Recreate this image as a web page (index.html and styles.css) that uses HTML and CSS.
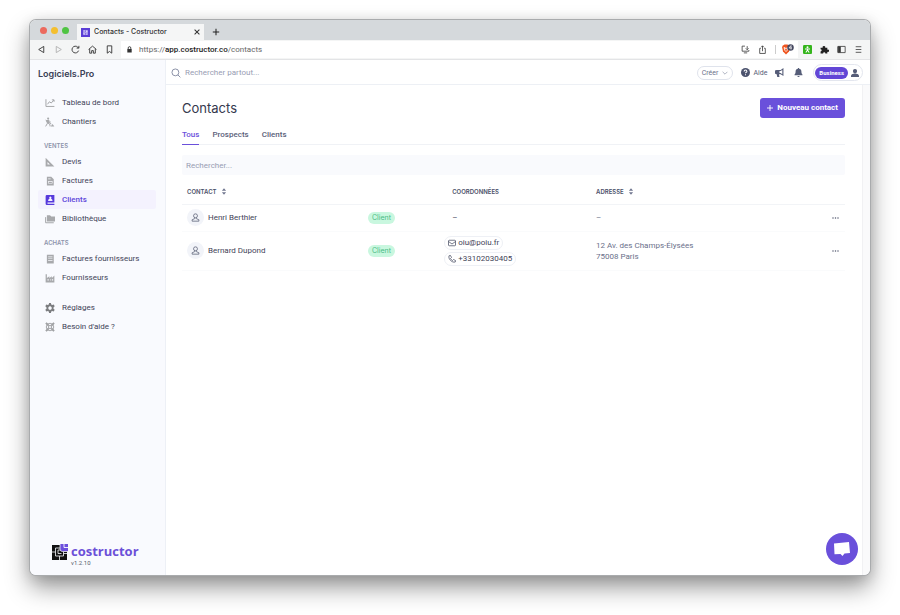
FILE: index.html
```
<!DOCTYPE html>
<html lang="fr">
<head>
<meta charset="utf-8">
<meta name="viewport" content="width=device-width, initial-scale=1">
<title>Contacts - Costructor</title>
<link rel="stylesheet" href="styles.css">
</head>
<body>
<div class="window">
  <div class="tabstrip">
    <div class="lights"><span class="light red"></span><span class="light yellow"></span><span class="light green"></span></div>
    <div class="browser-tab">
      <svg class="favicon" viewBox="0 0 16 16"><path fill="#5b3fd6" d="M0 0h16v16H0z"/><path fill="#d9d2fa" d="M4 4h8v8H4z"/><path stroke="#5b3fd6" fill="none" d="M4 7h4V4M8 12V9h4M6 9h2"/></svg>
      <span>Contacts - Costructor</span>
      <button class="plain close" aria-label="Fermer l'onglet"><svg class="ic6" viewBox="0 0 10 10"><path stroke="#333" stroke-width="1.7" d="M1 1l8 8M9 1L1 9"/></svg></button>
    </div>
    <button class="plain newtab" aria-label="Nouvel onglet"><svg class="ic8" viewBox="0 0 10 10"><path stroke="#222" stroke-width="1.3" d="M5 1v8M1 5h8"/></svg></button>
  </div>
  <div class="toolbar">
    <div class="navbtns">
      <button class="plain" aria-label="Précédent"><svg class="ic9" viewBox="0 0 16 16"><path d="M12 2.500v11L3 8z"/></svg></button>
      <button class="plain faded" aria-label="Suivant"><svg class="ic9" viewBox="0 0 16 16"><path d="M4 2.500v11L13 8z"/></svg></button>
      <button class="plain" aria-label="Recharger"><svg class="ic9" viewBox="0 0 16 16"><path d="M13.500 10A6 6 0 1 1 12 3.800l1.500 1.700M14 1.500v4h-4"/></svg></button>
      <button class="plain" aria-label="Accueil"><svg class="ic9" viewBox="0 0 16 16"><path d="M1 8l7-6 7 6M3 7v7.500h3.500V10h3v4.500H13V7"/></svg></button>
      <button class="plain" aria-label="Favori"><svg class="ic9" viewBox="0 0 16 16"><path d="M4 1.500h8v13l-4-3-4 3z"/></svg></button>
    </div>
    <div class="address">
      <svg class="ic7" viewBox="0 0 16 16"><path fill="#333" d="M3 7h10v8H3z"/><path fill="none" stroke="#333" stroke-width="2" d="M5 7V4.500a3 3 0 0 1 6 0V7"/></svg>
      <span class="url">https://<b>app.costructor.co</b>/contacts</span>
      <svg class="line ic9" viewBox="0 0 16 16"><path d="M7 2H2v9h12V9M5 14h6M11 2v6M8.500 6l2.500 2.500L13.500 6"/></svg>
      <svg class="line ic9" viewBox="0 0 16 16"><path d="M5 6H3v9h10V6h-2M8 11V1.500M5.500 4L8 1.500 10.500 4"/></svg>
      <span class="bar"></span>
      <svg class="brave" viewBox="0 0 26 22"><path fill="#f0551f" d="M4 3l3-2h6l3 2 2 3-2 9-6 6-6-6L2 6z"/><path fill="none" stroke="#fff" stroke-width="1.800" d="M6 7l2 6 2 2 2-2 2-6-4 2z"/><circle cx="19" cy="7" r="6.500" fill="#454860"/><path fill="none" stroke="#fff" stroke-width="1.400" d="M20 11V3l-4 5h6"/></svg>
    </div>
    <div class="extensions">
      <svg class="ic9" viewBox="0 0 16 16"><rect width="16" height="16" rx="2" fill="#35b51c"/><circle cx="8" cy="4" r="1.800" fill="#fff"/><path stroke="#fff" stroke-width="1.800" fill="none" d="M3.500 7h9M8 6v4M8 9l-3 4.500M8 9l3 4.500"/></svg>
      <svg class="ic9" viewBox="0 0 16 16"><path fill="#222" d="M1 5h4a2.200 2.200 0 1 1 4 0h4v3.500a2.200 2.200 0 1 1 0 3.500v3H9.500a2 2 0 1 0-4 0H1v-3.500a2 2 0 1 0 0-4z"/></svg>
      <svg class="line ic9" viewBox="0 0 16 16"><path d="M1.500 2.500h13v11h-13z"/><path fill="#333" d="M2 3h4v10H2z"/></svg>
      <svg class="line ic9" viewBox="0 0 16 16"><path d="M3 3h10M3 8h10M3 13h10"/></svg>
    </div>
  </div>

  <div class="app">
    <aside class="sidebar">
      <div class="brand">Logiciels.Pro</div>
      <nav>
        <a href="#"><svg viewBox="0 0 16 16"><path class="s" d="M1.500 2v11.500H15M4 10l3-4 3 2 4-4.500M11 3h3.500v3"/></svg>Tableau de bord</a>
        <a href="#"><svg viewBox="0 0 16 16"><circle cx="5" cy="2.500" r="1.700"/><path class="s" d="M2 7l3-2 4 3M5 6l-1 4-3 5M5 10l3 2v3M1 5l9 6"/><path d="M2 5h4l1 5H3zM9 15l3-4 3 4z"/></svg>Chantiers</a>
        <h2>VENTES</h2>
        <a href="#"><svg viewBox="0 0 16 16"><path fill-rule="evenodd" d="M1 1l14 14H1zM4 8v4h4z"/></svg>Devis</a>
        <a href="#"><svg viewBox="0 0 16 16"><path fill-rule="evenodd" d="M3 1h7l4 4v10H3zM5 4v1h4V4zM5 8v4h7V8zM6 9h5v2H6z"/></svg>Factures</a>
        <a href="#" class="active" aria-current="page"><svg viewBox="0 0 16 16"><path fill-rule="evenodd" d="M3 0h12v12H4v2h11v2H3a2 2 0 0 1-2-2V2a2 2 0 0 1 2-2zm5.500 2.500a1.800 1.800 0 1 0 .1 0zM5 9.500h7c0-3-1.500-3.500-3.500-3.500S5 6.500 5 9.500z"/></svg>Clients</a>
        <a href="#"><svg viewBox="0 0 16 16"><path d="M3 2h5l2 2h6v8H3z"/><path class="s" d="M1 5v9h13"/></svg>Bibliothèque</a>
        <h2>ACHATS</h2>
        <a href="#"><svg viewBox="0 0 16 16"><path fill-rule="evenodd" d="M3 1h11v14H3zM5 4v1h7V4zM5 7v1h7V7zM5 10v1h7v-1z"/></svg>Factures fournisseurs</a>
        <a href="#"><svg viewBox="0 0 16 16"><path fill-rule="evenodd" d="M1 2h2v6l4-3v3l4-3v3l4-4v11H1zM4 10v2h2v-2zM8 10v2h1v-2zM11 10v2h2v-2z"/></svg>Fournisseurs</a>
        <div class="spacer"></div>
        <a href="#"><svg class="dark" viewBox="0 0 16 16"><path fill-rule="evenodd" d="M6.500 0h3l.5 2.500 1.500.8L14 2.500l1.500 2.700-1.900 1.800v2l1.900 1.800L14 13.500l-2.500-.8-1.500.8-.5 2.500h-3L6 13.500l-1.500-.8-2.500.8L.5 10.800 2.400 9V7L.5 5.200 2 2.500l2.500.8L6 2.500zM8 5.200a2.800 2.800 0 1 0 .1 0z"/></svg>Réglages</a>
        <a href="#"><svg viewBox="0 0 16 16"><circle class="s" cx="8" cy="8" r="6"/><circle class="s" cx="8" cy="8" r="2.500"/><path class="thick" d="M1.500 1.500L6 6M14.500 1.500L10 6M1.500 14.500L6 10M14.500 14.500L10 10"/></svg>Besoin d'aide ?</a>
      </nav>
      <div class="logo">
        <svg viewBox="0 0 32 32"><path fill="#111" d="M0 2h30v30H0z"/><path fill="none" stroke="#f9fafe" stroke-width="1.600" d="M16 8H7v16h16v-8M0 16h7M15 24v8M23 19h7M12 12v7h7M12 12h4"/><path fill="#6c4fdc" stroke="#f9fafe" stroke-width="1.500" d="M16 -1h17v16H21a5 5 0 0 1-5-5z"/><path fill="none" stroke="#f9fafe" stroke-width="1.800" d="M24 0v7h8"/></svg>
        <div><strong>costructor</strong><small>v1.2.10</small></div>
      </div>
    </aside>

    <main>
      <header class="topbar">
        <label class="global" for="global-search"><svg viewBox="0 0 16 16"><circle cx="7" cy="7" r="5.500"/><path d="M11 11l4 4"/></svg></label>
        <input id="global-search" type="search" placeholder="Rechercher partout..." aria-label="Rechercher partout">
        <button class="create">Créer <svg viewBox="0 0 10 6"><path d="M1 1l4 4 4-4"/></svg></button>
        <a class="help" href="#"><svg viewBox="0 0 16 16"><circle cx="8" cy="8" r="8"/><path fill="none" stroke="#fff" stroke-width="1.800" d="M5.500 6c0-3 5-3 5 0C10.500 7.800 8 7.500 8 9.500M8 11v2"/></svg>Aide</a>
        <button class="plain" aria-label="Annonces"><svg class="ic9 solid" viewBox="0 0 16 16"><path fill-rule="evenodd" d="M15 0v14l-5-3H7l1 5H4l-1-5a3.500 3.500 0 0 1 0-7.500h7zM13 3.500L10 5.500H8v3.500h2l3 2z"/></svg></button>
        <button class="plain" aria-label="Notifications"><svg class="ic9 solid" viewBox="0 0 16 16"><path d="M7 0h2v1.500c3 .5 4.200 2.500 4.200 5 0 3 .8 3.500 1.800 5V13H1v-1.500c1-1.500 1.800-2 1.800-5 0-2.500 1.200-4.500 4.200-5zM6 14h4a2 2 0 0 1-4 0z"/></svg></button>
        <button class="account" aria-label="Compte Business"><span>Business</span><svg class="ic8 solid" viewBox="0 0 16 16"><path d="M8 0a4 4 0 0 1 4 4.500C12 7 10 9 8 9S4 7 4 4.500A4 4 0 0 1 8 0zM0 16v-2c0-2.500 2-4 5-4.500h6c3 .5 5 2 5 4.500v2z"/></svg></button>
      </header>
      <div class="scroller">
        <section class="content">
          <div class="heading">
            <h1>Contacts</h1>
            <button class="primary"><svg class="ic6" viewBox="0 0 10 10"><path stroke="#fff" stroke-width="1.500" d="M5 0v10M0 5h10"/></svg>Nouveau contact</button>
          </div>
          <div class="tabs"><a href="#" class="on">Tous</a><a href="#">Prospects</a><a href="#">Clients</a></div>
          <input class="filter" type="search" placeholder="Rechercher..." aria-label="Rechercher un contact">
          <table>
            <thead><tr>
              <th class="c1"><span class="sortable">CONTACT <svg viewBox="0 0 8 10"><path d="M1 4L4 .5 7 4zM1 6l3 3.500L7 6z"/></svg></span></th><th class="c2"></th><th class="c3">COORDONNÉES</th>
              <th><span class="sortable">ADRESSE <svg viewBox="0 0 8 10"><path d="M1 4L4 .5 7 4zM1 6l3 3.500L7 6z"/></svg></span></th><th class="c5"></th>
            </tr></thead>
            <tbody>
              <tr>
                <td><div class="person"><span class="avatar"><svg viewBox="0 0 16 16"><circle cx="8" cy="5" r="3.500"/><path d="M6.500 8.500V10L2 12v2.500h12V12l-4.500-2V8.500"/></svg></span>Henri Berthier</div></td>
                <td><span class="badge">Client</span></td><td>–</td><td class="soft">–</td>
                <td><button class="plain more" aria-label="Actions"><svg viewBox="0 0 14 4"><circle cx="2" cy="2" r="1.500"/><circle cx="7" cy="2" r="1.500"/><circle cx="12" cy="2" r="1.500"/></svg></button></td>
              </tr>
              <tr class="tall">
                <td><div class="person"><span class="avatar"><svg viewBox="0 0 16 16"><circle cx="8" cy="5" r="3.500"/><path d="M6.500 8.500V10L2 12v2.500h12V12l-4.500-2V8.500"/></svg></span>Bernard Dupond</div></td>
                <td><span class="badge">Client</span></td>
                <td><div class="chips">
                  <a href="mailto:oiu@poiu.fr"><svg viewBox="0 0 16 16"><rect x="1" y="2.500" width="14" height="11" rx="1.500"/><path d="M1 5l7 5 7-5"/></svg>oiu@poiu.fr</a>
                  <a href="tel:+33102030405"><svg viewBox="0 0 16 16"><path d="M2 1.500L5 1l2 4-2 2c1 2 2 3 4 4l2-2 4 2-.5 3C8 16 0 8 2 1.500z"/></svg>+33102030405</a>
                </div></td>
                <td class="soft">12 Av. des Champs-Élysées<br>75008 Paris</td>
                <td><button class="plain more" aria-label="Actions"><svg viewBox="0 0 14 4"><circle cx="2" cy="2" r="1.500"/><circle cx="7" cy="2" r="1.500"/><circle cx="12" cy="2" r="1.500"/></svg></button></td>
              </tr>
            </tbody>
          </table>
        </section>
        <div class="gutter"></div>
      </div>
    </main>
  </div>
  <button class="chat" aria-label="Ouvrir la messagerie"><svg viewBox="0 0 16 14"><path fill="#fff" d="M0 1.500L15 0l1 11-5.500.5L8.500 14l-2-2-6 .3z"/></svg></button>
</div>
</body>
</html>
```
FILE: styles.css
```
* { box-sizing: border-box; }
body {
  margin: 0;
  min-height: 100vh;
  padding: 20px 30px 40px;
  display: flex;
  background: #fff;
  color: #3f4358;
  font: 8px/12px Roboto, "Liberation Sans", sans-serif;
}
button, input { font: inherit; color: inherit; border: 0; background: none; padding: 0; margin: 0; }
a { color: inherit; text-decoration: none; }
svg { display: block; flex: none; }
h1, h2 { margin: 0; }

.window {
  flex: 1;
  position: relative;
  display: flex;
  flex-direction: column;
  border-radius: 6px;
  overflow: hidden;
  background: #fff;
  box-shadow: 0 0 0 1px #a9abad, 0 12px 24px rgba(0, 0, 0, .42), 0 2px 14px rgba(0, 0, 0, .12);
}

.plain { display: flex; align-items: center; justify-content: center; }
.ic6 { width: 6px; height: 6px; }
.ic7 { width: 7px; height: 7px; }
.ic8 { width: 8px; height: 8px; }
.ic9 { width: 9px; height: 9px; }
.solid { fill: #565d78; }
.line { fill: none; stroke: #444; stroke-width: 1.5; }

.tabstrip { height: 20px; display: flex; align-items: flex-end; background: #d5d9dc; }
.lights { width: 47px; height: 20px; padding-left: 10px; display: flex; align-items: center; gap: 4px; }
.light { width: 7px; height: 7px; border-radius: 50%; }
.red { background: #ec6a5e; }
.yellow { background: #f4bf2f; }
.green { background: #4fc443; }
.browser-tab {
  width: 127px;
  height: 16px;
  padding: 0 4px;
  display: flex;
  align-items: center;
  gap: 4px;
  background: #f5f6f6;
  color: #333;
  font: 500 7px/12px Inter, sans-serif;
}
.favicon { width: 9px; height: 9px; }
.close { margin-left: auto; }
.newtab { width: 24px; height: 16px; }

.toolbar { height: 20px; display: flex; align-items: center; background: #f4f5f5; border-bottom: 1px solid #e3e4e6; }
.navbtns { width: 91px; padding-left: 7px; display: flex; gap: 8px; }
.navbtns svg { fill: none; stroke: #333; stroke-width: 1.6; }
.navbtns .faded { opacity: .35; }
.address { flex: 1; height: 17px; padding: 0 4px 0 5px; display: flex; align-items: center; gap: 8px; background: #fff; color: #666; }
.address .ic7 { margin-right: -2px; }
.url { flex: 1; }
.url b { font-weight: 500; color: #222; }
.bar { width: 1px; height: 9px; background: #ccc; }
.brave { width: 13px; height: 11px; margin-left: -3px; }
.extensions { display: flex; gap: 8px; padding: 0 7px 0 5px; }

.app { flex: 1; display: flex; }
.sidebar { width: 136px; padding: 8px 9px 8px 8px; display: flex; flex-direction: column; background: #f9fafe; border-right: 1px solid #edf0f6; }
.brand { color: #3b3f55; font: 600 9px/12px Inter, sans-serif; }
nav { margin-top: 13px; }
nav a { height: 19px; padding-left: 7px; display: flex; align-items: center; gap: 7px; border-radius: 2px; }
nav svg { width: 10px; height: 10px; fill: #a8a9ac; }
nav .s { fill: none; stroke: #a0a1a4; stroke-width: 1.5; }
nav .thick { fill: none; stroke: #a0a1a4; stroke-width: 3; }
nav .dark { fill: #7c7d80; }
nav .active { background: #f4f2fe; color: #6046da; font-weight: 500; }
nav .active svg { fill: #5638dc; }
nav h2 { margin-top: 9px; padding-left: 6px; color: #8d93ab; font: 600 6px/12px Inter, sans-serif; }
.spacer { height: 11px; }
.logo { margin-top: auto; padding-left: 14px; display: flex; gap: 3px; align-items: flex-start; }
.logo svg { width: 16px; height: 16px; margin-top: 1px; }
.logo strong, .logo small { display: block; }
.logo strong { color: #6c50d8; font: 700 13px/16px "Open Sans", Inter, sans-serif; }
.logo small { color: #555a6c; font-size: 6px; line-height: 8px; }

main { flex: 1; min-width: 0; display: flex; flex-direction: column; }
.topbar { height: 25px; padding: 1px 7px 0 5px; display: flex; align-items: center; border-bottom: 1px solid #edf0f5; }
.global svg { width: 10px; height: 10px; fill: none; stroke: #7d849c; stroke-width: 1.4; }
.topbar input { flex: 1; min-width: 0; margin-left: 4px; }
input::placeholder { color: #989db3; opacity: 1; }
.create { height: 14px; padding: 0 4px; display: flex; align-items: center; gap: 4px; border: 1px solid #dfe3ec; border-radius: 7px; color: #6b718a; font-size: 7px; line-height: 12px; }
.create svg { width: 6px; height: 4px; fill: none; stroke: #7d849c; }
.help { margin: 0 8px; display: flex; align-items: center; gap: 3px; color: #565d78; font-size: 7px; }
.help svg { width: 9px; height: 9px; fill: #4c536e; }
.topbar .plain { margin-right: 10px; }
.account { height: 17px; padding: 0 3px 0 1px; display: flex; align-items: center; gap: 3px; border: 1px solid #e3e6ee; border-radius: 9px; }
.account span { padding: 0 4px; border-radius: 6px; background: #6246d6; color: #fff; font-size: 6px; line-height: 12px; font-weight: 700; }

.scroller { flex: 1; display: flex; }
.content { flex: 1; min-width: 0; padding: 13px 17px 16px 16px; }
.gutter { width: 8px; background: #fafafb; border-left: 1px solid #f1f1f3; }
.heading { display: flex; align-items: center; justify-content: space-between; }
h1 { color: #34384d; font: 400 13px/20px Inter, sans-serif; }
.primary { height: 20px; padding: 0 7px; display: flex; align-items: center; gap: 4px; border-radius: 3px; background: #6a50db; color: #fff; font-weight: 700; }
.tabs { margin-top: 6px; display: flex; gap: 13px; border-bottom: 1px solid #f0f2f6; color: #5a6079; }
.tabs a { height: 21px; line-height: 21px; margin-bottom: -1px; border-bottom: 1px solid transparent; font-weight: 500; }
.tabs .on { color: #6a50db; border-color: #6a50db; }
.filter { display: block; width: 100%; height: 20px; margin-top: 10px; padding: 0 4px; border-radius: 2px; background: #f9fafd; }

table { width: 100%; margin-top: 5px; border-collapse: collapse; table-layout: fixed; }
th { height: 24px; padding: 0 5px; text-align: left; color: #4a4f68; font: 600 6px/12px Inter, sans-serif; border-bottom: 1px solid #f2f4f7; }
.c1 { width: 27.3%; }
.c2 { width: 12.7%; }
.c3 { width: 21.7%; }
.c5 { width: 20px; }
.sortable { display: flex; align-items: center; gap: 4px; }
.sortable svg { width: 6px; height: 7px; fill: #70768f; }
td { height: 27px; padding: 0 5px; line-height: 11px; border-bottom: 1px solid #fafbfc; }
.tall td { height: 39px; }
.soft { color: #6a708a; }
.person { display: flex; align-items: center; gap: 4px; }
.avatar { width: 17px; height: 17px; display: grid; place-items: center; border-radius: 50%; background: #f2f4f9; }
.avatar svg { width: 9px; height: 9px; fill: none; stroke: #666c80; stroke-width: 1.5; }
.badge { display: inline-block; padding: 0 4px; border-radius: 6px; background: #c9f7df; color: #49bb85; font: 7px/12px Inter, sans-serif; }
.chips { margin-left: -8px; display: flex; flex-direction: column; align-items: flex-start; gap: 2px; }
.chips a { height: 14px; padding: 0 3px; display: flex; align-items: center; gap: 2px; border: 1px solid #eef0f5; border-radius: 7px; }
.chips svg { width: 8px; height: 8px; fill: none; stroke: #4a4f64; stroke-width: 1.5; }
.more { width: 8px; height: 8px; margin-left: 1px; }
.more svg { width: 7px; height: 2px; fill: #555b70; }

.chat { position: absolute; right: 12px; bottom: 10px; width: 32px; height: 32px; display: grid; place-items: center; border-radius: 50%; background: #6a50db; }
.chat svg { width: 16px; height: 14px; }
```
